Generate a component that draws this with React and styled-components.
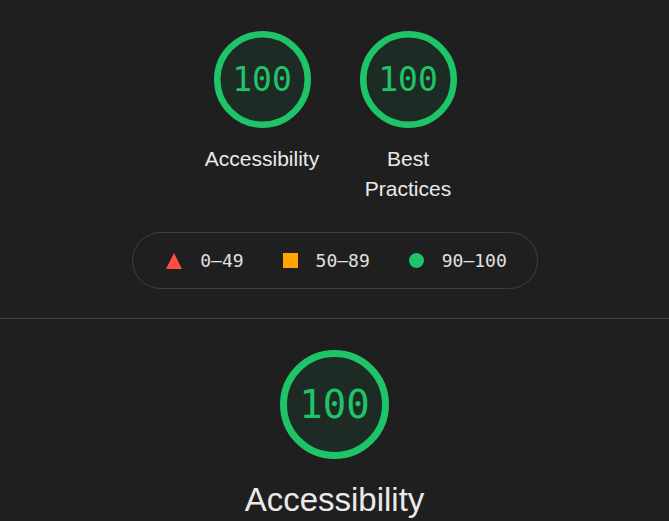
import React from "react";
import styled, { createGlobalStyle } from "styled-components";

const Global = createGlobalStyle`
  html, body { margin: 0; padding: 0; background: #1f1f1f; }
  body { font-family: "Liberation Sans", Arial, sans-serif; color: #e8e8e8; }
`;

const GREEN = "#1ec468";

const Page = styled.div`
  width: 669px;
  height: 521px;
  overflow: hidden;
  background: #1f1f1f;
`;

const TopSection = styled.section`
  display: flex;
  flex-direction: column;
  align-items: center;
  padding-top: 31px;
  padding-bottom: 29px;
  border-bottom: 1px solid #444;
`;

const GaugeRow = styled.div`
  display: flex;
  justify-content: center;
  gap: 26px;
  margin-left: 1px;
`;

const GaugeWrap = styled.div`
  display: flex;
  flex-direction: column;
  align-items: center;
  width: ${(p) => p.$width}px;
`;

const Ring = styled.div`
  position: relative;
  width: ${(p) => p.$size}px;
  height: ${(p) => p.$size}px;
  display: flex;
  align-items: center;
  justify-content: center;
`;

const RingSvg = styled.svg`
  position: absolute;
  inset: 0;
`;

const Score = styled.span`
  position: relative;
  font-family: "DejaVu Sans Mono", monospace;
  font-size: ${(p) => p.$fs}px;
  color: ${GREEN};
  line-height: 1;
`;

const Label = styled.div`
  margin-top: ${(p) => p.$mt}px;
  font-size: ${(p) => p.$fs}px;
  line-height: ${(p) => p.$lh}px;
  text-align: center;
  color: #eaeaea;
`;

const Legend = styled.div`
  margin-top: 28px;
  height: 55px;
  width: 400px;
  padding-left: 4px;
  border: 1px solid #3f3f3f;
  border-radius: 30px;
  display: flex;
  align-items: center;
  justify-content: center;
  gap: 39px;
  box-sizing: content-box;
`;

const LegendItem = styled.div`
  display: flex;
  align-items: center;
  gap: 18px;
  font-family: "DejaVu Sans Mono", monospace;
  font-size: 18px;
  color: #e0e0e0;
`;

const Square = styled.span`
  width: 15px;
  height: 15px;
  background: #ffa400;
`;

const Dot = styled.span`
  width: 15px;
  height: 15px;
  border-radius: 50%;
  background: ${GREEN};
`;

const BottomSection = styled.section`
  display: flex;
  justify-content: center;
  padding-top: 31px;
`;

function Gauge({ size, stroke, fs, label, labelFs, labelLh, labelMt, width }) {
  const r = (size - stroke) / 2;
  return (
    <GaugeWrap $width={width}>
      <Ring $size={size}>
        <RingSvg width={size} height={size} viewBox={`0 0 ${size} ${size}`}>
          <circle cx={size / 2} cy={size / 2} r={r} fill="rgba(30,196,104,0.08)" stroke={GREEN} strokeWidth={stroke} />
        </RingSvg>
        <Score $fs={fs}>100</Score>
      </Ring>
      <Label $fs={labelFs} $lh={labelLh} $mt={labelMt}>{label}</Label>
    </GaugeWrap>
  );
}

export default function App() {
  return (
    <Page>
      <Global />
      <TopSection>
        <GaugeRow>
          <Gauge size={97} stroke={6.5} fs={33} label="Accessibility" labelFs={21} labelLh={30} labelMt={16} width={120} />
          <Gauge size={97} stroke={6.5} fs={33} label="Best Practices" labelFs={21} labelLh={30} labelMt={16} width={120} />
        </GaugeRow>
        <Legend>
          <LegendItem>
            <svg width="16" height="16" viewBox="0 0 16 16">
              <polygon points="8,0 16,16 0,16" fill="#ff4e42" />
            </svg>
            0–49
          </LegendItem>
          <LegendItem>
            <Square />
            50–89
          </LegendItem>
          <LegendItem>
            <Dot />
            90–100
          </LegendItem>
        </Legend>
      </TopSection>
      <BottomSection>
        <Gauge size={109} stroke={7} fs={39} label="Accessibility" labelFs={33} labelLh={40} labelMt={21} width={300} />
      </BottomSection>
    </Page>
  );
}
